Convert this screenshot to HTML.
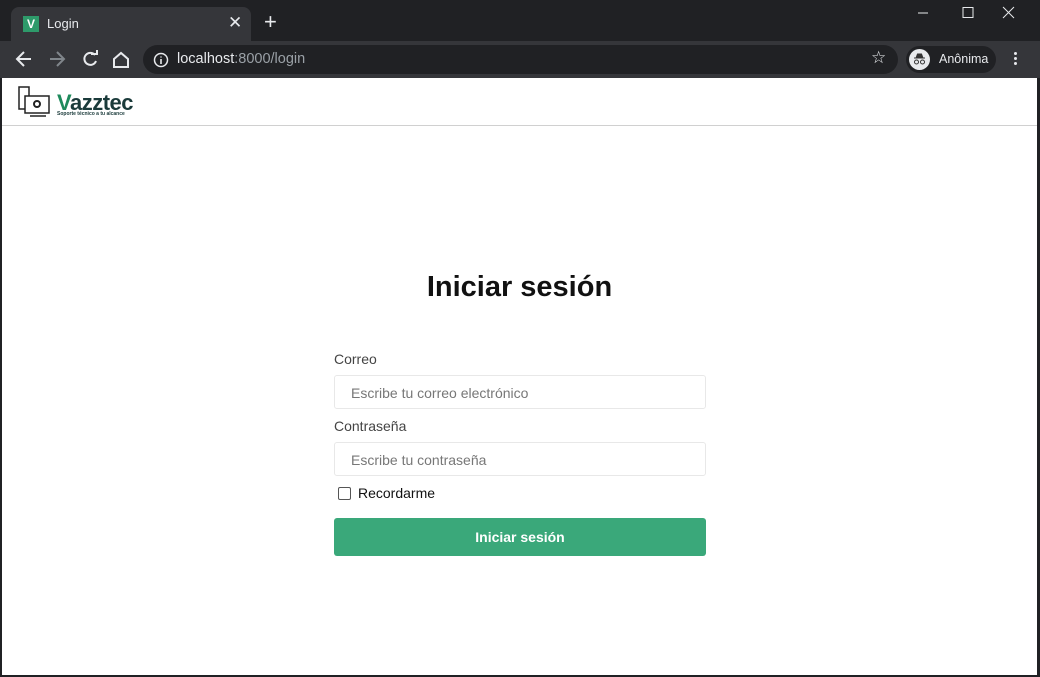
<!DOCTYPE html>
<html><head><meta charset="utf-8"><style>
*{box-sizing:border-box;margin:0;padding:0}
body{width:1040px;height:677px;background:#202124;font-family:"Liberation Sans",sans-serif;position:relative;overflow:hidden}
.tabbar{position:absolute;left:0;top:0;width:1040px;height:41px;background:#202124}
.tab{position:absolute;left:11px;top:7px;width:240px;height:34px;background:#35363a;border-radius:8px 8px 0 0}
.fav{position:absolute;left:12px;top:9px;width:16px;height:16px;background:#2e9a6a;color:#fff;font:bold 12px "Liberation Sans";text-align:center;line-height:16px}
.tab .t{position:absolute;left:36px;top:9px;color:#e8eaed;font-size:13px}
.tab .x{position:absolute;left:217px;top:6px;color:#e8eaed;font-size:17px}
.plus{position:absolute;left:264px;top:11px;color:#e8eaed;font-size:22px;line-height:22px}
.toolbar{position:absolute;left:0;top:41px;width:1040px;height:37px;background:#35363a}
.omni{position:absolute;left:143px;top:4px;width:755px;height:29px;background:#202124;border-radius:15px}
.omni .url{position:absolute;left:34px;top:6px;font-size:14.5px;color:#e8eaed}
.omni .url span{color:#9aa0a6}
.prof{position:absolute;left:906px;top:5px;width:90px;height:27px;background:#202124;border-radius:14px}
.prof .n{position:absolute;left:33px;top:6px;color:#e8eaed;font-size:12.5px}
.page{position:absolute;left:2px;top:78px;width:1035px;height:597px;background:#fff}
.nav{height:48px;border-bottom:1px solid #d0d0d0;position:relative}
h1{position:absolute;top:193px;width:100%;text-align:center;font-size:29px;font-weight:bold;color:#111}
.form{position:absolute;left:332px;top:273px;width:372px}
label{display:block;font-size:14px;color:#444;margin-bottom:8px}
.inp{height:34px;border:1px solid #e8e8e8;border-radius:3px;padding:9px 16px;font-size:14px;color:#777;margin-bottom:9px}
.chk{display:flex;align-items:center;font-size:14px;color:#111;margin-top:1px;margin-left:4px}
.chk i{width:13px;height:13px;border:1px solid #555;border-radius:2px;margin-right:7px}
.btn{margin-top:17px;height:38px;background:#3aa87a;border-radius:3px;color:#fff;font-weight:bold;font-size:14px;text-align:center;line-height:38px}
</style></head><body>
<div class="tabbar">
 <div class="tab"><div class="fav">V</div><div class="t">Login</div><div class="x">✕</div></div>
 <div class="plus">+</div>
 <svg style="position:absolute;left:918px;top:6px" width="110" height="14" stroke="#e8eaed" fill="none" stroke-width="1">
  <path d="M0 7h10"/><rect x="45" y="1.5" width="10" height="10"/><path d="M85 1l11 11M96 1L85 12"/></svg>
</div>
<div class="toolbar">
 <svg style="position:absolute;left:14px;top:9px" width="120" height="20" fill="none" stroke-width="2" >
  <path d="M3 9h14M10 2L3 9l7 7" stroke="#e8eaed"/>
  <path d="M36 9h14M43 2l7 7-7 7" stroke="#80868b"/>
  <path d="M81 5a6 6 0 1 0 1 6" stroke="#e8eaed"/><path d="M77 4h6V-2" stroke="#e8eaed"/>
  <path d="M100 9l7-6 7 6v8h-14z" stroke="#e8eaed"/>
 </svg>
 <div class="omni">
  <svg style="position:absolute;left:10px;top:7px" width="16" height="16"><circle cx="8" cy="8" r="6.5" stroke="#e8eaed" fill="none" stroke-width="1.5"/><path d="M8 7v5M8 4.5v1" stroke="#e8eaed" stroke-width="1.6"/></svg>
  <div class="url">localhost<span>:8000/login</span></div>
  <div style="position:absolute;left:728px;top:3px;color:#e8eaed;font-size:17px">☆</div>
 </div>
 <div class="prof"><svg style="position:absolute;left:3px;top:3px" width="21" height="21"><circle cx="10.5" cy="10.5" r="10.5" fill="#e8eaed"/><path d="M5 9h11M7 9l1.5-4h4L14 9" stroke="#333" fill="#333"/><circle cx="7.5" cy="13" r="2" stroke="#333" fill="none"/><circle cx="13.5" cy="13" r="2" stroke="#333" fill="none"/></svg><div class="n">Anônima</div></div>
 <div style="position:absolute;left:1014px;top:11px;width:3px"><div style="width:3px;height:3px;background:#e8eaed;border-radius:50%;margin-bottom:2px"></div><div style="width:3px;height:3px;background:#e8eaed;border-radius:50%;margin-bottom:2px"></div><div style="width:3px;height:3px;background:#e8eaed;border-radius:50%"></div></div>
</div>
<div class="page">
 <div class="nav">
  <svg style="position:absolute;left:16px;top:8px" width="40" height="32" fill="none" stroke="#222" stroke-width="1.5">
   <rect x="1" y="1" width="10" height="22"/><rect x="7" y="10" width="24" height="17" fill="#fff"/><circle cx="19" cy="18" r="3" stroke-width="2"/><path d="M12 30h16"/></svg>
  <div style="position:absolute;left:55px;top:12px;font:bold 22px 'Liberation Sans';color:#1e8a5c;letter-spacing:-.5px">V<span style="color:#1a3a3a">azztec</span></div>
  <div style="position:absolute;left:55px;top:33px;font:bold 5px 'Liberation Sans';color:#1a3a3a">Soporte técnico a tu alcance</div>
 </div>
 <h1>Iniciar sesión</h1>
 <div class="form">
  <label>Correo</label>
  <div class="inp">Escribe tu correo electrónico</div>
  <label>Contraseña</label>
  <div class="inp">Escribe tu contraseña</div>
  <div class="chk"><i></i>Recordarme</div>
  <div class="btn">Iniciar sesión</div>
 </div>
</div>
</body></html>
